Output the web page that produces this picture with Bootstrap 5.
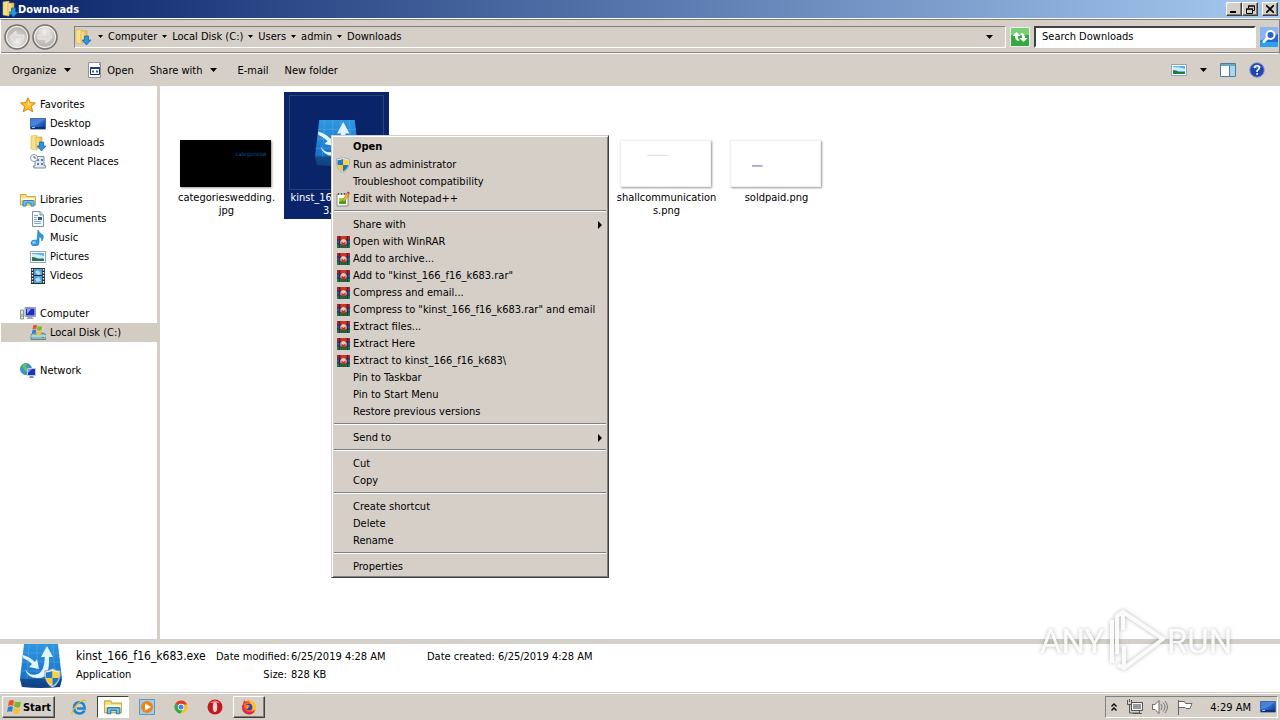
<!DOCTYPE html>
<html lang="en">
<head>
<meta charset="utf-8">
<meta name="viewport" content="width=device-width, initial-scale=1">
<title>Downloads</title>
<link href="https://cdn.jsdelivr.net/npm/bootstrap@5.3.0/dist/css/bootstrap.min.css" rel="stylesheet">
<style>
:root { --face: #d5cfc8; --shade: #808080; --dark: #404040; --navy: #0a246a; }
body { font: 11px/13px "DejaVu Sans Condensed", "Noto Sans", sans-serif; color: #000; background: #fff; }
button, input { font: inherit; color: inherit; }
button { background: none; border: 0; padding: 0; white-space: nowrap; }
a { color: inherit; text-decoration: none; white-space: nowrap; }
svg { display: block; flex: none; }
.i16 { width: 16px; height: 16px; }
.tri { width: 7px; height: 4px; }
.face { background: var(--face); }
.titlebar { height: 18px; background: linear-gradient(90deg, #0a246a, #a6caf0); color: #fff; padding: 0 2px; }
.titlebar h1 { font: bold 11px/13px "DejaVu Sans Condensed", "Noto Sans", sans-serif; margin: 0; }
.raised { background: var(--face); border: 1px solid; border-color: #fff var(--dark) var(--dark) #fff; box-shadow: inset -1px -1px var(--shade); }
.capbtn { width: 16px; height: 14px; display: flex; align-items: center; justify-content: center; }
.addressbar { height: 35px; margin-top: 1px; padding: 0 1px 0 3px; border: 1px solid var(--shade); border-bottom-color: #fff; border-left-color: #fff; box-shadow: inset 0 -1px var(--shade); }
.navpair { gap: 2px; }
.crumbs { height: 22px; border: 1px solid; border-color: var(--shade) #fff #fff var(--shade); padding: 0 12px 0 0; margin-left: 16px; }
.crumbs ol { list-style: none; margin: 0; padding: 0; gap: 5px; }
.crumbs li { display: flex; align-items: center; gap: 5px; }
.crumbs li .tri { width: 5px; height: 3px; }
.crumbroot { gap: 7px; }
.searchbox { width: 222px; height: 22px; background: #fff; border: 2px solid; border-color: var(--dark) #fff #fff var(--dark); border-radius: 0; padding: 0 6px; }
.searchbox::placeholder { color: #000; opacity: 1; }
.commands { height: 32px; padding: 0 15px 0 12px; }
.viewtools { gap: 13px; }
.sidebar { width: 160px; border-right: 3px solid var(--face); padding-top: 9px; }
.sidebar ul { list-style: none; margin: 0 0 19px; padding: 0; }
.sidebar a { height: 19px; display: flex; align-items: center; gap: 4px; margin-left: 1px; }
.sidebar a.root { padding-left: 19px; }
.sidebar a.leaf { padding-left: 29px; }
.sidebar a.current { background: #d2ccc3; margin-right: -3px; }
.files { display: grid; grid-template-columns: repeat(auto-fill, 105px); gap: 5px; padding: 6px 14px; }
.filetile { height: 127px; padding: 0 2px; display: flex; flex-direction: column; align-items: center; justify-content: flex-start; white-space: nowrap; text-align: center; }
.filetile.chosen { background: var(--navy); color: #fff; }
.thumbarea { width: 95px; height: 95px; margin: 3px 0 1px; padding: 0 2px 3px 0; display: flex; align-items: flex-end; justify-content: center; flex: none; }
.chosen .thumbarea { align-items: center; border: 1px solid #2b4279; padding: 0; }
.thumb { width: 91px; height: 47px; background: #fff; border: 1px solid #f0f0f0; box-shadow: 1px 1px 2px #999; }
.thumb.night { background: #000; border-color: #000; }
.col5 { grid-column-start: 5; }
.ctxmenu { position: absolute; left: 171px; top: 49px; width: 278px; background: var(--face); border: 1px solid; border-color: var(--face) var(--dark) var(--dark) var(--face); box-shadow: inset 1px 1px #fff, inset -1px -1px var(--shade); padding: 1px 2px 2px; }
.ctxmenu button { width: 100%; height: 17px; display: flex; align-items: center; gap: 2px; padding-left: 19px; text-align: left; }
.ctxmenu button.withicon { padding-left: 1px; }
.ctxmenu button.usual { height: 19px; font-weight: bold; }
.ctxmenu hr { margin: 3px 0 4px; border: 0; border-top: 1px solid var(--shade); border-bottom: 1px solid #fff; opacity: 1; }
.divide { height: 5px; background: #d3d0c8; }
.details { height: 48px; padding-left: 19px; }
.facts { display: grid; grid-template-columns: 140px 71px 140px 67px auto; row-gap: 3px; padding: 5px 0 0 13px; margin: 0; align-content: start; }
.facts > * { margin: 0; font-weight: normal; line-height: 15px; white-space: nowrap; }
.facts .fname { font-size: 12px; }
.facts dt { text-align: right; }
.facts dd { padding-left: 4px; }
.taskbar { height: 28px; border-top: 1px solid #d3d0c8; box-shadow: inset 0 1px #fff; padding: 3px 2px 2px; }
.startbtn { width: 53px; height: 22px; font-weight: bold; display: flex; align-items: center; justify-content: center; gap: 1px; }
.quickbar { gap: 2px; }
.quick { width: 32px; height: 22px; display: flex; align-items: center; justify-content: center; }
.sunken { background: #fff; border: 1px solid; border-color: var(--dark) #fff #fff var(--dark); }
.tray { height: 22px; border: 1px solid; border-color: var(--shade) #fff #fff var(--shade); padding: 0 1px 0 5px; gap: 9px; }
.watermark { position: absolute; right: 46px; bottom: 46px; width: 196px; height: 66px; pointer-events: none; filter: drop-shadow(0 0 2px rgba(0,0,0,.3)); }
.watermark text { font: 33px Roboto, "Liberation Sans", sans-serif; fill: #fff; fill-opacity: .9; }
</style>
</head>
<body>
<svg width="0" height="0" class="position-absolute" aria-hidden="true">
<defs>
<linearGradient id="gBlue" x2="1" y2="1"><stop stop-color="#1a54b8"/><stop offset=".5" stop-color="#2d6fd6"/><stop offset="1" stop-color="#0a2a7c"/></linearGradient>
<linearGradient id="gApp" x2="0" y2="1"><stop stop-color="#2f97e0"/><stop offset=".75" stop-color="#1c73c8"/><stop offset="1" stop-color="#0b3f84"/></linearGradient>
<linearGradient id="gFold" x2="1"><stop stop-color="#fbe89a"/><stop offset="1" stop-color="#e2b94c"/></linearGradient>
<radialGradient id="gNav" cy=".7"><stop stop-color="#f2f1ef"/><stop offset="1" stop-color="#bcb9b5"/></radialGradient>
<symbol id="tri" viewBox="0 0 7 4"><path d="M0 0h7L3.500 4z"/></symbol>
<symbol id="dl" viewBox="0 0 16 16"><path d="M1 1l6-1v15l-6-1z" fill="#f7e08a" stroke="#d6b052" stroke-width=".6"/><path d="M6 2h6v11H6z" fill="url(#gFold)" stroke="#c99f3d" stroke-width=".6"/><path d="M9.500 7h4v4H16l-4.500 5L7 11h2.500z" fill="#2b94dd" stroke="#0f62ac" stroke-width=".7"/></symbol>
<symbol id="star" viewBox="0 0 16 16"><path d="M8 .7l2.100 4.900 5.300.4-4.100 3.400 1.400 5.300L8 11.900l-4.700 2.800 1.400-5.300L.6 6l5.300-.4z" fill="#ffc32e" stroke="#e07a10"/><path d="M8 3l1.300 3.700H12L8 8z" fill="#fff1a8"/></symbol>
<symbol id="desk" viewBox="0 0 16 16"><path d="M.5 2.500h15v10.500H.5z" fill="url(#gBlue)" stroke="#4a6a9e"/><path d="M1 3h14L6 9 1 10z" fill="#5b96e8" opacity=".6"/><path d="M1 11h14v2H1z" fill="#103070"/><path d="M2 11h3v1H2z" fill="#8fc3f5"/></symbol>
<symbol id="recent" viewBox="0 0 16 16"><path d="M5 2.500h9v9h1.500V14H4l-1-2h2z" fill="#dfe8ef" stroke="#7a8fa3"/><path d="M7 5h2v2H7zm4 0h2v2h-2zM7 9h2v2H7zm4 0h2v2h-2z" fill="#5684a8"/><circle cx="4" cy="4" r="3.500" fill="#fff" stroke="#8798a8"/><path d="M4 2v2h2" fill="none" stroke="#557"/></symbol>
<symbol id="lib" viewBox="0 0 16 16"><path d="M.5 13V2.500H6l1 2h8.500V13z" fill="#f5dc80" stroke="#d0a94a"/><path d="M1 6h14v2H1z" fill="#fff7cf"/><path d="M3 14V9.500q0-1 1-1h9q1 0 1 1V14h-3v-3H6v3z" fill="#72bee9" stroke="#2e82b7"/></symbol>
<symbol id="doc" viewBox="0 0 16 16"><path d="M2.500.5H10L13.500 4v11.500h-11z" fill="#fff" stroke="#7393b0"/><path d="M10 .5V4h3.500" fill="#cde" stroke="#7393b0"/><path d="M4 4.500h4M4 6.500h3M4 8.500h3M4 10.500h7M4 12.500h7" stroke="#7ea9cf"/><path d="M8 6h4v3H8z" fill="#285c93"/></symbol>
<symbol id="music" viewBox="0 0 16 16"><path d="M8 0q1 3 5 5 1 3-1 6 0-4-3-4v6q0 3-4 3-4 0-4-3 0-3 4-3 1 0 2 .5z" fill="#2e9be4" stroke="#1873bb" stroke-width=".6"/><ellipse cx="4" cy="12.500" rx="1.800" ry="1.200" fill="#8fd1fa"/></symbol>
<symbol id="pic" viewBox="0 0 16 16"><path d="M.5 2.500h15v11H.5z" fill="#fff" stroke="#90a4b3"/><path d="M2 4h12v8H2z" fill="#5eb6e9"/><path d="M2 5q6 0 12 2v2H2z" fill="#d2eff9"/><path d="M2 8q4 0 6 2h6v2H2z" fill="#28744f"/></symbol>
<symbol id="vid" viewBox="0 0 16 16"><path d="M1 0h14v16H1z" fill="#252f38"/><path d="M4 1h8v6H4zM4 8h8v7H4z" fill="#4ba4dc"/><path d="M5 4l3-2 3 4-3 1zM5 11l4-2 2 4-4 1z" fill="#b5dcf0"/><path d="M2.500 1v14M13.500 1v14" stroke="#fff" stroke-width="1.400" stroke-dasharray="1.500 1.500"/></symbol>
<symbol id="comp" viewBox="0 0 16 16"><path d="M.5 4h3v9h-3z" fill="#dde2de" stroke="#8b968f"/><path d="M1.500 8h1v3h-1z" fill="#5bb648"/><path d="M5 1.500h10.500v9H5z" fill="#d7dde5" stroke="#919bb5"/><path d="M6 2.500h8.500v7H6z" fill="#1c2fc0"/><path d="M7 3h4l-4 5z" fill="#8f9df4"/><path d="M8 11h4l2 2H6z" fill="#9ea7b2"/></symbol>
<symbol id="flag4" viewBox="0 0 16 16"><path d="M3 2q3-2 5 0L7 7Q5 5.500 2 7z" fill="#ec5323"/><path d="M9 2.500q3 1.500 6 0L14 8q-3 1.500-6-.5z" fill="#77b82a"/><path d="M2 8q3-1.500 5 0l-1 5q-2-1.500-5 0z" fill="#2c7fd6"/><path d="M8 9q3 1.500 6 0l-1 5q-3 1.500-6-.5z" fill="#fbbf22"/></symbol>
<symbol id="disk" viewBox="0 0 16 16"><path d="M1 10l2-2h11l2 2v4.500H1z" fill="#84b8c2" stroke="#55757d" stroke-width=".8"/><path d="M1 11h15" stroke="#d8eef0"/><path d="M12 12.500h2" stroke="#3bbb39"/><svg x="1" y="-1" width="12" height="12" viewBox="0 0 16 16"><use href="#flag4"/></svg></symbol>
<symbol id="net" viewBox="0 0 16 16"><circle cx="6" cy="6" r="5.500" fill="#339bd0" stroke="#216e9e" stroke-width=".7"/><path d="M2 3q2-3 5-2L6 4l3 2-3 3-2-3z" fill="#65bf5d"/><path d="M7.500 5.500h8v7h-8z" fill="#1c35c0" stroke="#c2cbe0"/><path d="M8 6h4l-4 4z" fill="#7f94f0"/><path d="M10 13h3l1 2H9z" fill="#8590a5"/></symbol>
<symbol id="exe" viewBox="0 0 16 16"><path d="M1.500.5h12v15h-12z" fill="#fff" stroke="#8b93a2"/><path d="M12 1l1 1v1h-1z" fill="#888"/><path d="M3.500 5.500h9v7h-9z" fill="#fff" stroke="#224"/><path d="M3 5h10v2H3z" fill="#1b3f90"/><path d="M5 8.500h2v2H5zM9 8.500h2v2H9z" fill="#2563be"/></symbol>
<symbol id="shield" viewBox="0 0 16 16"><path d="M8 0q3 2 6.500 2 .8 10-6.500 14Q.7 12 1.500 2 5 2 8 0z" fill="#e0e5e9" stroke="#8996a0" stroke-width=".6"/><path d="M8 2v6H2.700Q2.300 6 2.500 3.300 5.500 3.200 8 2z" fill="#2479c8"/><path d="M8 2v6h5.300q.4-2 .2-4.700Q10.500 3.200 8 2z" fill="#fbd238"/><path d="M2.700 8H8v6.700Q3.500 12 2.700 8z" fill="#fbc928"/><path d="M13.300 8H8v6.700q4.500-2.700 5.300-6.700z" fill="#2176c4"/></symbol>
<symbol id="npp" viewBox="0 0 16 16"><path d="M2 3h11v12H2z" fill="#fff" stroke="#888"/><path d="M3 2h1v2H3zm3 0h1v2H6zm3 0h1v2H9z" fill="#555"/><path d="M4 7h7v6H4z" fill="#8dd33c"/><path d="M4 11l7-3v5H4z" fill="#4f9f25"/><path d="M8 9l4-7 2 1-4 7-2 1z" fill="#ffb62c" stroke="#8d5413" stroke-width=".5"/><path d="M12.500 1l2 1.500" stroke="#d22" stroke-width="1.500"/></symbol>
<symbol id="rar" viewBox="0 0 16 16"><path d="M2 2h13v4H2z" fill="#b0222e"/><path d="M2 6h13v4H2z" fill="#2e53a6"/><path d="M2 10h13v4H2z" fill="#147b40"/><path d="M2 6h13M2 10h13" stroke="#20202c" stroke-width=".7"/><path d="M4 2h1v12H4zM12 2h1v12h-1z" fill="#4e2330"/><path d="M6 2h5v12H6z" fill="#c43a26"/><path d="M5.500 7q3-4 6 0v3h-6z" fill="#f0c6b8"/><path d="M6.500 10V7.500l2 1.500 2-1.500V10z" fill="#c22c20"/><path d="M6 11h5v3H6z" fill="#2b5a46"/></symbol>
<symbol id="app" viewBox="0 0 44 44"><path d="M5 0h34l4 35-2 8q-19 2-38 0l-2-8z" fill="url(#gApp)"/><path d="M1 35h42l-2 7H3z" fill="#123f78" opacity=".65"/><path d="M10 0L8 35M18 0v35M26 0v35M34 0l2 35M4 9h36M3 18h38M1 27h42" stroke="#69baf0" stroke-width=".6" opacity=".6"/><path d="M4 11q7 2 12 7l2-3 2 10-10-2 3-3q-4-4-9-6z" fill="#e2f4ff"/><path d="M6 25q5 8 13 5 6-2 7-17h-4l6-11 6 11h-4q1 21-10 21Q9 35 6 25z" fill="#e2f4ff"/></symbol>
<symbol id="arrow" viewBox="0 0 26 26"><circle cx="13" cy="13" r="12" fill="url(#gNav)" stroke="#77736f" stroke-width="1.500"/><circle cx="13" cy="13" r="10.500" fill="none" stroke="#f7f6f4"/><path d="M6 13l6-6v4h8v4h-8v4z" fill="#dedbd7" stroke="#ebe9e6"/></symbol>
</defs>
</svg>

<div class="min-vh-100 d-flex flex-column position-relative">
<header>
  <div class="titlebar d-flex align-items-center justify-content-between">
    <div class="d-flex align-items-center"><svg class="i16"><use href="#dl"/></svg><h1>Downloads</h1></div>
    <div class="d-flex">
      <button class="raised capbtn" aria-label="Minimize"><svg width="8" height="8"><path d="M0 6h6v2H0z"/></svg></button>
      <button class="raised capbtn" aria-label="Restore"><svg width="9" height="9"><path d="M2.500 3V1h6v4.500H7M2 1h7M.5 4h6v4.500h-6zM0 4h7" fill="none" stroke="#000"/></svg></button>
      <button class="raised capbtn ms-1" aria-label="Close"><svg width="8" height="8"><path d="M0 0l8 8M8 0L0 8" stroke="#000" stroke-width="1.600"/></svg></button>
    </div>
  </div>
  <div class="addressbar face d-flex align-items-center">
    <div class="navpair d-flex">
      <button aria-label="Back"><svg width="26" height="26"><use href="#arrow"/></svg></button>
      <button aria-label="Forward"><svg width="26" height="26"><g transform="rotate(180 13 13)"><use href="#arrow"/></g></svg></button>
    </div>
    <nav class="crumbs flex-grow-1 d-flex align-items-center justify-content-between" aria-label="Address">
      <div class="crumbroot d-flex align-items-center"><svg class="i16"><use href="#dl"/></svg>
      <ol class="d-flex">
        <li><svg class="tri"><use href="#tri"/></svg><a href="#">Computer</a></li>
        <li><svg class="tri"><use href="#tri"/></svg><a href="#">Local Disk (C:)</a></li>
        <li><svg class="tri"><use href="#tri"/></svg><a href="#">Users</a></li>
        <li><svg class="tri"><use href="#tri"/></svg><a href="#">admin</a></li>
        <li><svg class="tri"><use href="#tri"/></svg><a href="#">Downloads</a></li>
      </ol></div>
      <button class="me-n1" aria-label="Previous locations"><svg class="tri"><use href="#tri"/></svg></button>
    </nav>
    <button class="ms-1" aria-label="Refresh"><svg width="20" height="20"><path d="M.5.5h19v19H.5z" fill="#36a83f" stroke="#eee"/><path d="M1 1h18v7H1z" fill="#79cf78"/><path d="M8 14q-3-1-3-5H2.500l4-4 4 4H8q-.5 3 2 4zM12 6q3 1 3 5h2.500l-4 4-4-4H12q.5-3-2-4z" fill="#fff"/></svg></button>
    <input class="searchbox mx-1" type="search" placeholder="Search Downloads" aria-label="Search Downloads">
    <button aria-label="Search"><svg width="18" height="20"><path d="M0 0h18v20H0z" fill="#2764d5"/><path d="M0 0h18v7L0 14z" fill="#8cb3f1"/><path d="M0 15h18v5H0z" fill="#25a2eb"/><circle cx="10.500" cy="8" r="4" fill="#2c61c8" stroke="#fff" stroke-width="2"/><path d="M7.500 11L3 15.500" stroke="#fff" stroke-width="2.500"/></svg></button>
  </div>
  <div class="commands face d-flex align-items-center justify-content-between">
    <div class="d-flex align-items-center">
      <button class="d-flex align-items-center gap-2">Organize <svg class="tri"><use href="#tri"/></svg></button>
      <button class="d-flex align-items-center gap-1 ms-3"><svg class="i16"><use href="#exe"/></svg>Open</button>
      <button class="d-flex align-items-center gap-2 ms-3">Share with <svg class="tri"><use href="#tri"/></svg></button>
      <button class="ms-3 ps-1">E-mail</button>
      <button class="ms-3">New folder</button>
    </div>
    <div class="viewtools d-flex align-items-center">
      <button aria-label="Change your view"><svg class="i16"><use href="#pic"/></svg></button>
      <button aria-label="More options"><svg class="tri"><use href="#tri"/></svg></button>
      <button aria-label="Preview pane"><svg width="16" height="16"><path d="M.5 1.500h15v13H.5z" fill="#fff" stroke="#4e7c9c"/><path d="M1 2h14v2H1z" fill="#6ca5c2"/><path d="M10 4h5v10h-5z" fill="#a6d8ee"/><path d="M9.500 4v10" stroke="#4e7c9c"/></svg></button>
      <button aria-label="Help"><svg width="16" height="16" viewBox="0 0 16 16"><circle cx="8" cy="8" r="7.300" fill="#2144b5" stroke="#8aa0ce"/><path d="M3 5q5-5 10 0-5 3-10 0z" fill="#7b9ae8" opacity=".6"/><path d="M5.700 6q0-2.200 2.400-2.200 2.300 0 2.300 2Q10.400 7 8.100 8.600V10" fill="none" stroke="#fff" stroke-width="1.600"/><circle cx="8.100" cy="12" r="1" fill="#fff"/></svg></button>
    </div>
  </div>
</header>

<main class="flex-grow-1 d-flex">
  <nav class="sidebar flex-shrink-0" aria-label="Folders">
    <ul>
      <li><a class="root" href="#"><svg class="i16"><use href="#star"/></svg>Favorites</a></li>
      <li><a class="leaf" href="#"><svg class="i16"><use href="#desk"/></svg>Desktop</a></li>
      <li><a class="leaf" href="#"><svg class="i16"><use href="#dl"/></svg>Downloads</a></li>
      <li><a class="leaf" href="#"><svg class="i16"><use href="#recent"/></svg>Recent Places</a></li>
    </ul>
    <ul>
      <li><a class="root" href="#"><svg class="i16"><use href="#lib"/></svg>Libraries</a></li>
      <li><a class="leaf" href="#"><svg class="i16"><use href="#doc"/></svg>Documents</a></li>
      <li><a class="leaf" href="#"><svg class="i16"><use href="#music"/></svg>Music</a></li>
      <li><a class="leaf" href="#"><svg class="i16"><use href="#pic"/></svg>Pictures</a></li>
      <li><a class="leaf" href="#"><svg class="i16"><use href="#vid"/></svg>Videos</a></li>
    </ul>
    <ul>
      <li><a class="root" href="#"><svg class="i16"><use href="#comp"/></svg>Computer</a></li>
      <li><a class="leaf current" href="#"><svg class="i16"><use href="#disk"/></svg>Local Disk (C:)</a></li>
    </ul>
    <ul class="mb-0">
      <li><a class="root" href="#"><svg class="i16"><use href="#net"/></svg>Network</a></li>
    </ul>
  </nav>
  <section class="flex-grow-1 position-relative" aria-label="Files">
    <div class="files">
      <button class="filetile"><span class="thumbarea"><svg class="thumb night" viewBox="0 0 91 47"><text x="56" y="16" font-size="6" fill="#075293">categoriesw</text></svg></span>categorieswedding.<br>jpg</button>
      <button class="filetile chosen"><span class="thumbarea"><svg width="46" height="46"><use href="#app"/></svg></span>kinst_166_f16_k68<br>3.exe</button>
      <button class="filetile col5"><span class="thumbarea"><svg class="thumb" viewBox="0 0 91 47"><path d="M26 15h23" stroke="#ddd"/></svg></span>shallcommunication<br>s.png</button>
      <button class="filetile"><span class="thumbarea"><svg class="thumb" viewBox="0 0 91 47"><path d="M21 26h11" stroke="#aaaad2" stroke-width="2"/></svg></span>soldpaid.png</button>
    </div>
    <div class="ctxmenu" role="menu">
      <button class="usual" role="menuitem">Open</button>
      <button class="withicon" role="menuitem"><svg class="i16"><use href="#shield"/></svg>Run as administrator</button>
      <button role="menuitem">Troubleshoot compatibility</button>
      <button class="withicon" role="menuitem"><svg class="i16"><use href="#npp"/></svg>Edit with Notepad++</button>
      <hr>
      <button class="justify-content-between pe-1" role="menuitem">Share with <svg width="4" height="8"><path d="M0 0l4 4-4 4z"/></svg></button>
      <button class="withicon" role="menuitem"><svg class="i16"><use href="#rar"/></svg>Open with WinRAR</button>
      <button class="withicon" role="menuitem"><svg class="i16"><use href="#rar"/></svg>Add to archive...</button>
      <button class="withicon" role="menuitem"><svg class="i16"><use href="#rar"/></svg>Add to "kinst_166_f16_k683.rar"</button>
      <button class="withicon" role="menuitem"><svg class="i16"><use href="#rar"/></svg>Compress and email...</button>
      <button class="withicon" role="menuitem"><svg class="i16"><use href="#rar"/></svg>Compress to "kinst_166_f16_k683.rar" and email</button>
      <button class="withicon" role="menuitem"><svg class="i16"><use href="#rar"/></svg>Extract files...</button>
      <button class="withicon" role="menuitem"><svg class="i16"><use href="#rar"/></svg>Extract Here</button>
      <button class="withicon" role="menuitem"><svg class="i16"><use href="#rar"/></svg>Extract to kinst_166_f16_k683\</button>
      <button role="menuitem">Pin to Taskbar</button>
      <button role="menuitem">Pin to Start Menu</button>
      <button role="menuitem">Restore previous versions</button>
      <hr>
      <button class="justify-content-between pe-1" role="menuitem">Send to <svg width="4" height="8"><path d="M0 0l4 4-4 4z"/></svg></button>
      <hr>
      <button role="menuitem">Cut</button>
      <button role="menuitem">Copy</button>
      <hr>
      <button role="menuitem">Create shortcut</button>
      <button role="menuitem">Delete</button>
      <button role="menuitem">Rename</button>
      <hr>
      <button role="menuitem">Properties</button>
    </div>
  </section>
</main>

<div class="divide"></div>
<section class="details d-flex" aria-label="Details">
  <svg width="44" height="44"><use href="#app"/><svg x="24" y="24" width="19" height="20" viewBox="0 0 16 16"><use href="#shield"/></svg></svg>
  <dl class="facts">
    <dd class="fname p-0">kinst_166_f16_k683.exe</dd><dt>Date modified:</dt><dd>6/25/2019 4:28 AM</dd><dt>Date created:</dt><dd>6/25/2019 4:28 AM</dd>
    <dd class="p-0">Application</dd><dt>Size:</dt><dd>828 KB</dd>
  </dl>
</section>

<footer class="taskbar face d-flex align-items-center justify-content-between">
  <div class="d-flex align-items-center">
    <button class="startbtn raised"><svg class="i16"><use href="#flag4"/></svg>Start</button>
    <div class="quickbar d-flex ms-2">
      <button class="quick" aria-label="Internet Explorer"><svg width="16" height="16" viewBox="0 0 16 16"><path d="M13.500 11.500Q12 14.500 8.300 14.500 3 14 3 8.800 3.200 3.500 8.300 3.300q5.200.3 5.400 6.200H6" fill="none" stroke="#1e85d3" stroke-width="2.600"/><path d="M1.500 15q-2-2 4-8.500T15 1.500" fill="none" stroke="#efb52b" stroke-width="1.300"/></svg></button>
      <button class="quick sunken" aria-label="Windows Explorer"><svg width="18" height="18" viewBox="0 0 16 16"><use href="#lib"/></svg></button>
      <button class="quick" aria-label="Windows Media Player"><svg width="16" height="16"><path d="M.5.5h15v15H.5z" fill="#9fcff0" stroke="#5d95c5"/><circle cx="8" cy="8" r="6" fill="#ef8416"/><path d="M6 4.500l6 3.500-6 3.500z" fill="#fff"/></svg></button>
      <button class="quick" aria-label="Chrome"><svg width="16" height="16" viewBox="0 0 16 16"><circle cx="8" cy="8" r="6.500" fill="#fbc117"/><path d="M8 8L2.400 4.700A6.500 6.500 0 0 1 14 5.500H8z" fill="#e33b2e"/><path d="M8 8L2.400 4.700A6.500 6.500 0 0 0 7.500 14.500L10.500 9z" fill="#2da94f"/><circle cx="8" cy="8" r="3.200" fill="#fff"/><circle cx="8" cy="8" r="2.500" fill="#4285f4"/></svg></button>
      <button class="quick" aria-label="Opera"><svg width="16" height="16" viewBox="0 0 16 16"><ellipse cx="8" cy="8" rx="7.500" ry="7.500" fill="#c41820"/><path d="M3 4q5-5 10 0z" fill="#ee7370"/><ellipse cx="8" cy="8" rx="2.200" ry="5" fill="#e8d5d0"/></svg></button>
      <button class="quick raised" aria-label="Firefox"><svg width="16" height="16" viewBox="0 0 16 16"><circle cx="8" cy="8.500" r="7" fill="#f46b21"/><path d="M2 5L3 1l3 3z" fill="#ed3d2e"/><path d="M8 .5q7 2 7 8T8 15.500Q13 12 11 7 9 5 8 .5z" fill="#ffc42c"/><path d="M1 8q0 7 7 7.500 5 0 6-5-3 3-7 2T3 5Q1 6 1 8z" fill="#e3284f"/><circle cx="8" cy="8" r="3.300" fill="#383cb2"/><path d="M4 7q3-2 5 0-2 1-2 3-3 0-3-3z" fill="#f99024"/></svg></button>
    </div>
  </div>
  <div class="tray d-flex align-items-center">
    <button aria-label="Show hidden icons"><svg width="6" height="8"><path d="M.5 3.500L3 1l2.500 2.500M.5 7.500L3 5l2.500 2.500" fill="none" stroke="#000" stroke-width="1.300"/></svg></button>
    <button aria-label="Network"><svg width="17" height="16"><path d="M5.500 3.500h11v8h-11z" fill="#999" stroke="#555"/><path d="M6.500 4.500h9v6h-9z" fill="none" stroke="#fff"/><path d="M1.500 1v4.500h4V1M3.500 0v3M3.500 6v8h10v-2M7 14.500h9" fill="none" stroke="#555"/></svg></button>
    <button aria-label="Volume"><svg width="16" height="16"><path d="M.5 5.500H3l4-4v13l-4-4H.5z" fill="#fff" stroke="#666"/><path d="M9 5q2 3 0 6M11 3.500q4 4.500 0 9M13 2q5 6 0 12" fill="none" stroke="#777"/></svg></button>
    <button aria-label="Action Center"><svg width="16" height="16"><path d="M1.500 1v15M1.500 2.500h6l1 2h6.500l-2 5h-4l-1-1h-7" fill="#fff" stroke="#666"/></svg></button>
    <time class="ms-2">4:29 AM</time>
    <button aria-label="Show desktop"><svg class="i16"><use href="#desk"/></svg></button>
  </div>
</footer>

<svg class="watermark" viewBox="0 0 196 66" role="img" aria-label="ANY RUN">
  <text x="2" y="45">ANY</text><text x="129" y="45">RUN</text>
  <path d="M74 12v43M85 22V4l40 27-39 29V38M85 4l-6 4v38M86 60l-6-3" fill="none" stroke="#fff" stroke-opacity=".9" stroke-width="4" stroke-linejoin="round"/>
</svg>
</div>
<script src="https://cdn.jsdelivr.net/npm/bootstrap@5.3.0/dist/js/bootstrap.bundle.min.js"></script>
</body>
</html>
